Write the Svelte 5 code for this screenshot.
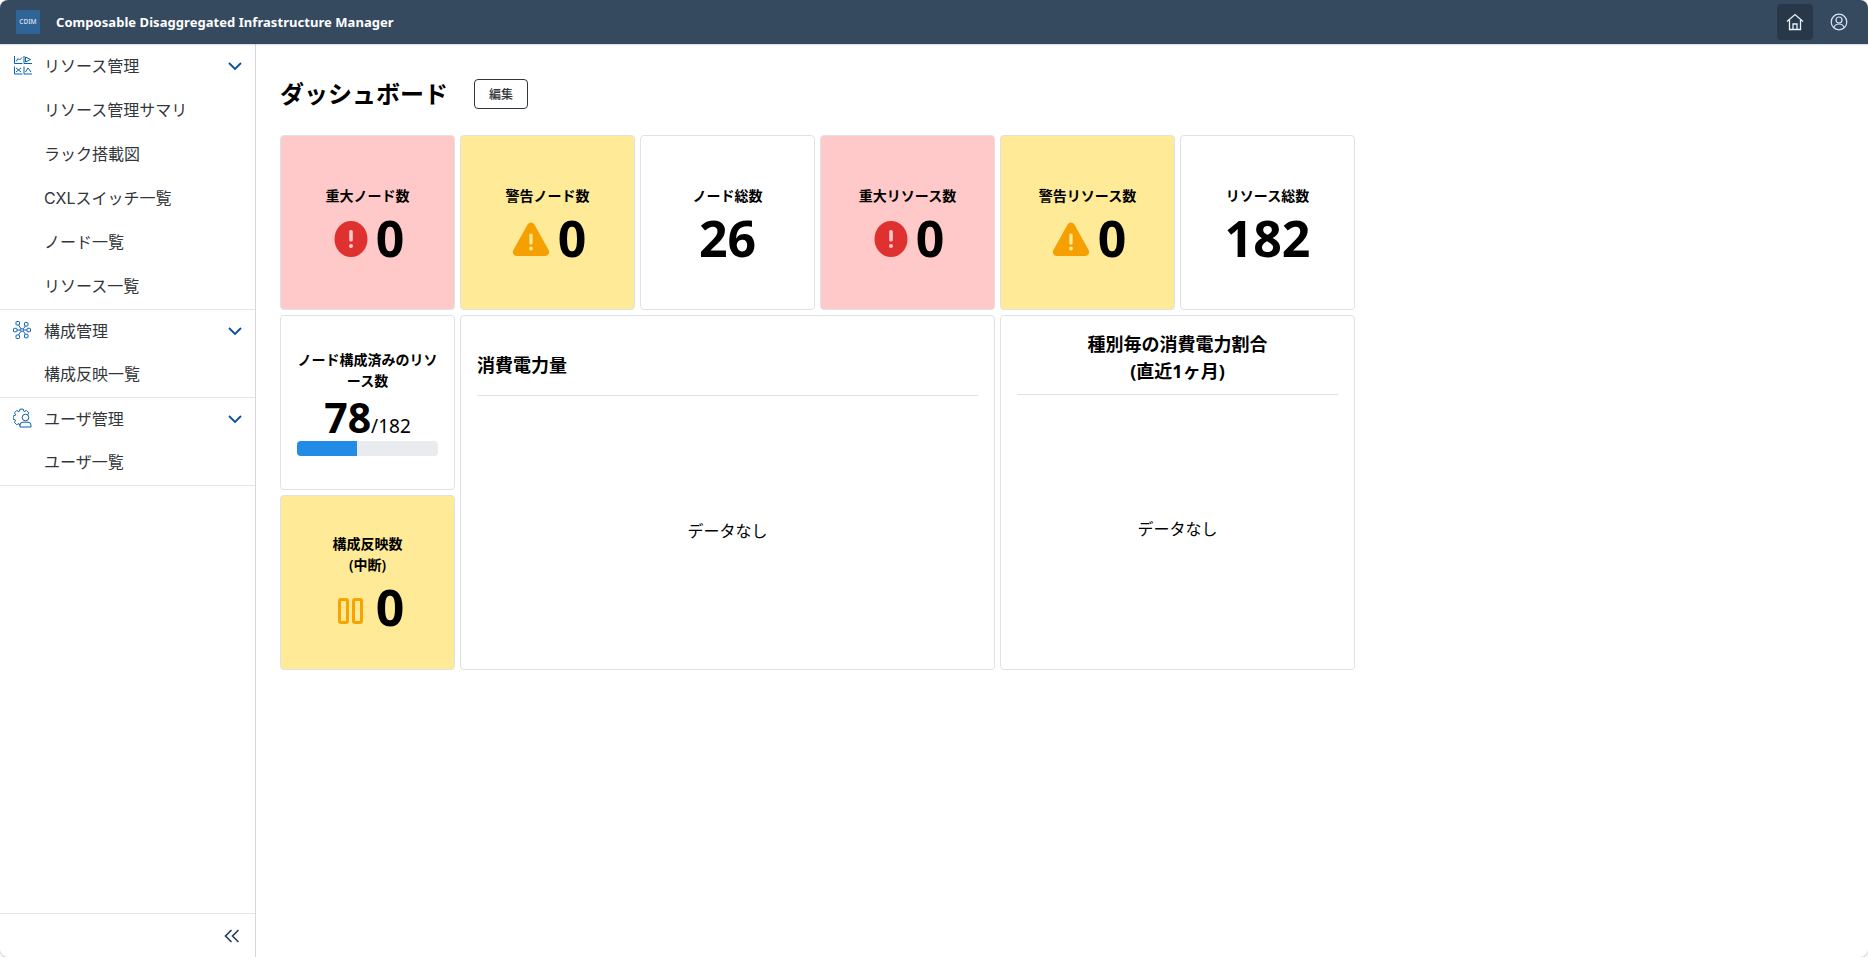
<script lang="ts">
  const groups = [
    { title: 'リソース管理', icon: 'chart', items: ['リソース管理サマリ', 'ラック搭載図', 'CXLスイッチ一覧', 'ノード一覧', 'リソース一覧'] },
    { title: '構成管理', icon: 'nodes', items: ['構成反映一覧'] },
    { title: 'ユーザ管理', icon: 'user', items: ['ユーザ一覧'] }
  ];
  const stats = [
    { label: '重大ノード数', value: 0, tone: 'red', icon: 'error' },
    { label: '警告ノード数', value: 0, tone: 'yellow', icon: 'warn' },
    { label: 'ノード総数', value: 26 },
    { label: '重大リソース数', value: 0, tone: 'red', icon: 'error' },
    { label: '警告リソース数', value: 0, tone: 'yellow', icon: 'warn' },
    { label: 'リソース総数', value: 182 }
  ];
  const used = 78;
  const total = 182;

  // open gear outline: teeth run from the upper right, round the left, to the bottom
  function gearPath(cx: number, cy: number) {
    const pt = (deg: number, r: number) => {
      const a = (deg * Math.PI) / 180;
      return `${(cx + r * Math.sin(a)).toFixed(2)} ${(cy - r * Math.cos(a)).toFixed(2)}`;
    };
    const parts: string[] = [];
    for (const t of [45, 0, -45, -90, -135, -180]) {
      parts.push(pt(t + 21, 6.6), pt(t + 11, 8.6), pt(t - 11, 8.6), pt(t - 21, 6.6));
    }
    return 'M' + parts.join('L');
  }
  const gear = gearPath(8.6, 9.6);
</script>

{#snippet statIcon(kind)}
  {#if kind === 'error'}
    <svg class="stat-icon" width="34" height="36" viewBox="0 0 34 36">
      <ellipse cx="17" cy="18" rx="16.5" ry="18" fill="#e03131" />
      <rect x="15.2" y="9" width="3.6" height="11.5" rx="1.6" fill="#ffc9c9" />
      <circle cx="17" cy="25" r="2" fill="#ffc9c9" />
    </svg>
  {:else}
    <svg class="stat-icon" width="38" height="35" viewBox="0 0 38 35">
      <path d="M15.6 2.5a4 4 0 0 1 6.8 0l14.2 25.6a4 4 0 0 1-3.4 6H4.8a4 4 0 0 1-3.4-6z" fill="#f59f00" />
      <rect x="17.4" y="11.5" width="3.2" height="11" rx="1.5" fill="#ffec99" />
      <circle cx="19" cy="26.5" r="1.9" fill="#ffec99" />
    </svg>
  {/if}
{/snippet}

{#snippet navIcon(kind)}
  <svg class="nav-icon" width="20" height="20" viewBox="0 0 20 20" fill="none" stroke="#0a62b0" stroke-width="1">
    {#if kind === 'chart'}
      <path d="M1.500 1v7.500h8M11 1v7.500h8M1.500 11.500V19h8M11 11.500V19h8" />
      <path d="M3 6.500l2-3 1.500 1.500L9 2.500M12.500 2l5 2.500-5 2.500zM3 13l5 4M8 13l-5 4M12.500 17l2.500-4 3 4" />
    {:else if kind === 'nodes'}
      <rect x="3" y="1.500" width="3.500" height="3.500" rx=".8" />
      <rect x="11.500" y="2.500" width="3.500" height="3.500" rx=".8" />
      <rect x="0.500" y="8.300" width="3.500" height="3.500" rx=".8" />
      <rect x="7.800" y="8.800" width="2.500" height="2.500" rx=".6" />
      <rect x="14" y="8.300" width="3.500" height="3.500" rx=".8" />
      <rect x="3" y="15" width="3.500" height="3.500" rx=".8" />
      <rect x="11.500" y="14.300" width="3.500" height="3.500" rx=".8" />
      <path d="M4 10h3.800M10.300 10H14M5.500 5l2.500 3.800M12.500 6l-2.200 2.800M5.500 15l2.500-3.700M12.500 14.300l-2.200-3" />
    {:else}
      <path d={gear} stroke-linejoin="round" />
      <circle cx="12.500" cy="9.500" r="3.300" fill="#fff" />
      <path d="M7 19v-1.800a3 3 0 0 1 3-3h5a3 3 0 0 1 3 3V19z" fill="#fff" />
    {/if}
  </svg>
{/snippet}

<div class="window">
  <header class="shell">
    <div class="logo">CDIM</div>
    <div class="product">Composable Disaggregated Infrastructure Manager</div>
    <button class="shell-btn active" aria-label="ホーム">
      <svg width="18" height="18" viewBox="0 0 18 18" fill="none" stroke="#e8f2ff" stroke-width="1.300">
        <path d="M1 8.500 9 1.500l8 7M3.500 7v9.500h11V7M7 16.500v-5.500h4v5.500" />
      </svg>
    </button>
    <button class="shell-btn" aria-label="ユーザ">
      <svg width="18" height="18" viewBox="0 0 18 18" fill="none" stroke="#d6e6fa" stroke-width="1.200">
        <circle cx="9" cy="9" r="7.800" />
        <circle cx="9" cy="7" r="3" />
        <path d="M3.800 14.500c1-2.500 2.800-3.500 5.200-3.500s4.200 1 5.200 3.500" />
      </svg>
    </button>
  </header>

  <div class="body">
    <nav class="side">
      <div class="side-list">
        {#each groups as group}
          <section class="group">
            <div class="row head">
              {@render navIcon(group.icon)}
              <span class="row-title">{group.title}</span>
              <svg class="chev" width="14" height="9" viewBox="0 0 14 9" fill="none" stroke="#0a4f9e" stroke-width="1.800">
                <path d="M1 1l6 6 6-6" />
              </svg>
            </div>
            {#each group.items as item}
              <div class="row item">{item}</div>
            {/each}
          </section>
        {/each}
      </div>
      <div class="side-foot">
        <svg width="16" height="14" viewBox="0 0 16 14" fill="none" stroke="#223a5a" stroke-width="1.600">
          <path d="M7.500 1 1.500 7l6 6M14.500 1l-6 6 6 6" />
        </svg>
      </div>
    </nav>

    <main class="content">
      <div class="title-row">
        <h1>ダッシュボード</h1>
        <button class="edit">編集</button>
      </div>

      <div class="grid">
        {#each stats as s}
          <div class="card stat {s.tone ?? ''}">
            <div class="label">{s.label}</div>
            <div class="value" class:with-icon={s.icon}>
              {#if s.icon}{@render statIcon(s.icon)}{/if}
              <span>{s.value}</span>
            </div>
          </div>
        {/each}

        <div class="card stat progress-card">
          <div class="label">ノード構成済みのリソース数</div>
          <div class="ratio"><span class="big">{used}</span><span class="of">/{total}</span></div>
          <div class="bar"><div class="fill" style="width: {(used / total) * 100}%"></div></div>
        </div>

        <div class="card panel power">
          <div class="panel-head left"><h2>消費電力量</h2></div>
          <div class="empty">データなし</div>
        </div>

        <div class="card panel share">
          <div class="panel-head"><h2>種別毎の消費電力割合<br />(直近1ヶ月)</h2></div>
          <div class="empty">データなし</div>
        </div>

        <div class="card stat yellow paused">
          <div class="label">構成反映数<br />(中断)</div>
          <div class="value">
            <svg class="pause" width="26" height="26" viewBox="0 0 26 26" fill="none" stroke="#f8a400" stroke-width="3">
              <rect x="1.500" y="1.500" width="8" height="23" rx="1.500" />
              <rect x="15.500" y="1.500" width="8" height="23" rx="1.500" />
            </svg>
            <span>0</span>
          </div>
        </div>
      </div>
    </main>
  </div>
</div>

<style>
  :global(body) {
    background: #fff;
    font-family: "Noto Sans", "Noto Sans CJK JP", sans-serif;
  }

  .window {
    height: 957px;
    display: flex;
    flex-direction: column;
    border-radius: 8px;
    overflow: hidden;
    background: #fff;
    box-shadow: 0 1px 2px rgba(0, 0, 0, 0.25);
    color: #000;
  }

  .shell {
    height: 44px;
    flex: none;
    display: flex;
    align-items: center;
    background: #354a5f;
    padding: 0 11px 0 16px;
    box-shadow: 0 1px 1px rgba(0, 0, 0, 0.12);
    z-index: 1;
  }

  .logo {
    width: 24px;
    height: 24px;
    background: #2f6497;
    color: #c9d8e6;
    font-size: 6.500px;
    font-weight: 600;
    line-height: 24px;
    text-align: center;
  }

  .product {
    margin-left: 16px;
    flex: 1;
    color: #fff;
    font-size: 13px;
    font-weight: 700;
    letter-spacing: 0.05px;
  }

  .shell-btn {
    width: 36px;
    height: 36px;
    border: 0;
    border-radius: 4px;
    background: transparent;
    display: flex;
    align-items: center;
    justify-content: center;
    padding: 0;
    margin-left: 8px;
  }

  .shell-btn.active {
    background: #283848;
  }

  .body {
    flex: 1;
    display: flex;
    min-height: 0;
  }

  .side {
    width: 256px;
    flex: none;
    display: flex;
    flex-direction: column;
    border-right: 1px solid #d4d6d9;
    box-sizing: border-box;
  }

  .side-list {
    flex: 1;
  }

  .group {
    border-bottom: 1px solid #e4e5e7;
  }

  .group:first-child {
    padding-bottom: 1px;
  }

  .group:not(:first-child) .item {
    height: 43px;
    padding-bottom: 6px;
  }

  .group:not(:first-child) .head {
    padding-bottom: 4px;
  }

  .row {
    height: 44px;
    box-sizing: border-box;
    display: flex;
    align-items: center;
    font-family: Inter, "Noto Sans CJK JP", sans-serif;
    font-size: 16px;
    color: #32363a;
    padding-bottom: 2px;
  }

  .head {
    padding: 0 12px 2px 13px;
  }

  .row-title {
    flex: 1;
    margin-left: 11px;
  }

  .chev {
    margin-right: 1px;
    margin-top: 2px;
  }

  .item {
    padding-left: 44px;
  }

  .side-foot {
    height: 43px;
    border-top: 1px solid #e4e5e7;
    display: flex;
    align-items: center;
    justify-content: flex-end;
    padding-right: 15px;
  }

  .content {
    flex: 1;
    padding: 34px 24px 0;
  }

  .title-row {
    display: flex;
    align-items: center;
    height: 32px;
    margin-bottom: 25px;
  }

  h1 {
    margin: 0;
    font-size: 24px;
    font-weight: 700;
    line-height: 32px;
  }

  .edit {
    margin-left: 26px;
    width: 54px;
    height: 30px;
    border: 1px solid #32363a;
    border-radius: 4px;
    background: #fff;
    color: #32363a;
    font-family: inherit;
    font-size: 12px;
    font-weight: 500;
    padding: 0;
  }

  .grid {
    display: grid;
    grid-template-columns: repeat(6, 175px);
    grid-auto-rows: 175px;
    gap: 5px;
  }

  .card {
    box-sizing: border-box;
    border: 1px solid #dee2e6;
    border-radius: 4px;
    background: #fff;
    min-width: 0;
  }

  .stat {
    display: flex;
    flex-direction: column;
    align-items: center;
    justify-content: center;
    text-align: center;
    padding-top: 7px;
  }

  .red {
    background: #ffc9c9;
  }

  .yellow {
    background: #feea97;
  }

  .label {
    font-size: 14px;
    font-weight: 600;
    line-height: 21px;
  }

  .value {
    display: flex;
    align-items: center;
    justify-content: center;
    gap: 8px;
    font-size: 50px;
    font-weight: 700;
    line-height: 60px;
    margin-top: 2px;
  }

  .with-icon {
    padding-left: 3px;
  }

  .stat-icon {
    flex: none;
    margin-top: 3px;
  }

  .progress-card {
    padding: 8px 16px;
  }

  .ratio {
    line-height: 42px;
    height: 45px;
    margin-top: 5px;
  }

  .big {
    font-size: 41px;
    font-weight: 700;
  }

  .of {
    font-size: 19px;
  }

  .bar {
    width: 100%;
    height: 15px;
    border-radius: 4px;
    background: #e9ecef;
    overflow: hidden;
  }

  .fill {
    height: 100%;
    background: #228be6;
  }

  .power {
    grid-column: span 3;
    grid-row: span 2;
  }

  .share {
    grid-column: span 2;
    grid-row: span 2;
  }

  .paused {
    grid-column: 1;
    padding: 4px 0 0 0;
  }

  .paused .value {
    gap: 12px;
    margin-top: 2px;
    padding-left: 7px;
  }

  .pause {
    margin-top: 8px;
  }

  .panel {
    display: flex;
    flex-direction: column;
    padding: 0 16px;
  }

  .panel-head {
    box-sizing: border-box;
    height: 79px;
    flex: none;
    display: flex;
    align-items: flex-end;
    justify-content: center;
    border-bottom: 1px solid #dee2e6;
    text-align: center;
    padding-bottom: 9px;
  }

  .panel-head.left {
    justify-content: flex-start;
    height: 80px;
    padding-bottom: 16px;
  }

  h2 {
    margin: 0;
    font-size: 18px;
    font-weight: 700;
    line-height: 27px;
  }

  .empty {
    flex: 1;
    display: flex;
    align-items: center;
    justify-content: center;
    font-size: 16px;
    padding-bottom: 5px;
  }

  .share .empty {
    padding-bottom: 9px;
  }
</style>
